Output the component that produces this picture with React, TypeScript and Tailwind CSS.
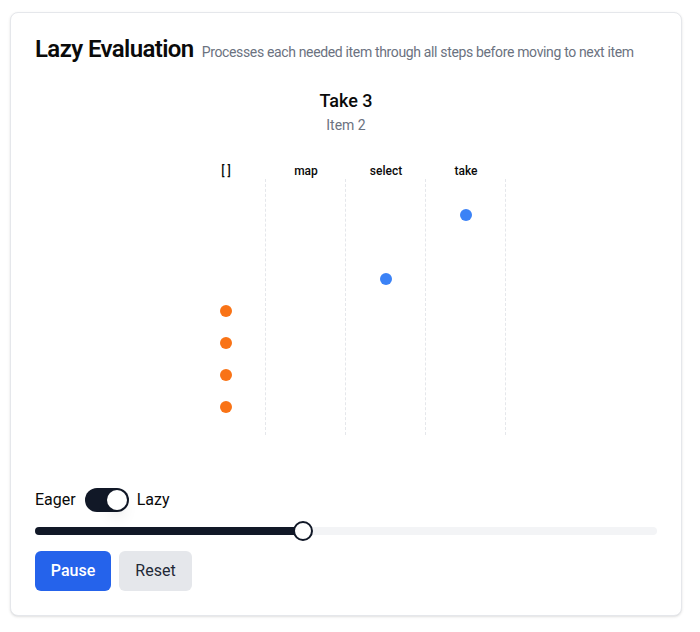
import React from "react";

type Col = { label: string; rows: (null | "blue" | "orange")[] };

const columns: Col[] = [
  { label: "[ ]", rows: [null, null, null, "orange", "orange", "orange", "orange"] },
  { label: "map", rows: [null, null, null, null, null, null, null] },
  { label: "select", rows: [null, null, "blue", null, null, null, null] },
  { label: "take", rows: ["blue", null, null, null, null, null, null] },
];

const Dot = ({ color }: { color: "blue" | "orange" }) => (
  <div
    className={
      color === "blue"
        ? "w-3 h-3 rounded-full bg-[#3b82f6]"
        : "w-3 h-3 rounded-full bg-[#f97316]"
    }
  />
);

const Pipeline = () => (
  <div className="mt-7 flex justify-center">
    {columns.map((col) => (
      <div key={col.label} className="w-20 flex flex-col">
        <div className="h-4 text-xs leading-4 font-medium text-center text-[#0a0a0a] whitespace-pre">{col.label}</div>
        <div className="h-64 pt-5 border-r border-dashed border-[#e5e7eb] flex flex-col">
          {col.rows.map((r, i) => (
            <div key={i} className="h-8 flex items-center justify-center">
              {r && <Dot color={r} />}
            </div>
          ))}
        </div>
      </div>
    ))}
  </div>
);

export default function App() {
  return (
    <div className="pt-3 pl-2.5 bg-white min-h-[632px] font-['Roboto','Inter',sans-serif]">
      <div className="w-[672px] rounded-lg border border-[#e5e7eb] bg-white shadow-sm text-[#0a0a0a]">
        <div className="p-6 flex items-baseline gap-2 whitespace-nowrap">
          <h3 className="text-2xl font-semibold leading-none tracking-tight shrink-0">Lazy Evaluation</h3>
          <p className="text-sm text-[#6b7280] tracking-[-0.025em]">
            Processes each needed item through all steps before moving to next item
          </p>
        </div>
        <div className="px-6 pb-6 pt-px">
          <div className="flex flex-col items-center">
            <div className="text-lg leading-7 font-medium">Take 3</div>
            <div className="text-sm text-[#6b7280]">Item 2</div>
          </div>
          <Pipeline />
          <div className="mt-[53px] flex items-center gap-2 text-base">
            <span>Eager</span>
            <button className="ml-px w-11 h-6 rounded-full bg-[#111827] border-2 border-transparent flex items-center">
              <span className="block w-5 h-5 rounded-full bg-white shadow-lg translate-x-5" />
            </button>
            <span>Lazy</span>
          </div>
          <div className="mt-[15px] relative h-2 rounded-full bg-[#f3f4f6]">
            <div className="h-2 rounded-full bg-[#111827] w-[268px]" />
            <div className="absolute left-[258px] -top-1.5 w-5 h-5 rounded-full bg-white border-2 border-[#111827]" />
          </div>
          <div className="mt-4 flex gap-2">
            <button className="h-10 w-[76px] flex items-center justify-center rounded-md bg-[#2563eb] text-white text-base font-medium">Pause</button>
            <button className="h-10 w-[73px] flex items-center justify-center rounded-md bg-[#e5e7eb] text-[#1f2937] text-base">Reset</button>
          </div>
        </div>
      </div>
    </div>
  );
}
